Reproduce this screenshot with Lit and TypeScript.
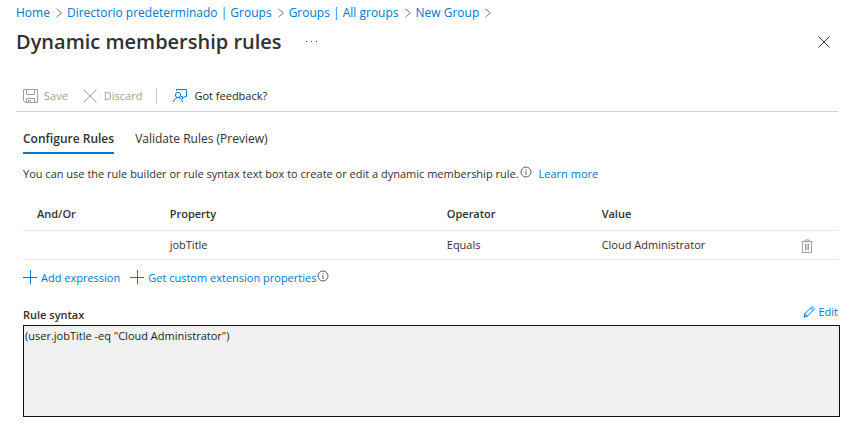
import { LitElement, html, css, svg } from "lit";
import { customElement, property, state } from "lit/decorators.js";
import { classMap } from "lit/directives/class-map.js";

const icons = {
  chevron: { size: [8, 10], body: svg`<path d="M1.5 1 6.5 5 1.5 9" />` },
  save: {
    size: [16, 16],
    body: svg`<path d="M1.500 1.500h14v13h-12l-2-2z M4.500 1.500v5h8v-5 M4.500 14.500v-4h8v4 M6.500 14.500v-2h2v2" />`,
  },
  discard: { size: [16, 16], body: svg`<path d="M1.5 1.5l13 13M14.5 1.5l-13 13" />` },
  feedback: {
    size: [16, 16],
    body: svg`<circle cx="6" cy="7" r="2.600" /><path d="M1.500 14c.4-2.600 2.200-4.400 4.500-4.400s4.100 1.800 4.500 4.400M4.500 3v-1.500h10v7h-1.500l-2.500 2.300v-2.300h-1.500" />`,
  },
  close: { size: [12, 12], body: svg`<path d="M.5 .5l11 11M11.5 .5l-11 11" />` },
  info: {
    size: [12, 12],
    body: svg`<circle cx="6" cy="6" r="5" /><path d="M6 5v4M6 3v1" />`,
  },
  plus: { size: [14, 14], body: svg`<path d="M7.500 0v14M0 7.500h14" />` },
  trash: {
    size: [12, 14],
    body: svg`<path d="M.5 2.500h11M4 2.500v-1.500h4v1.500M1.500 2.500v11h9v-11M4.500 4.500v7M6 4.500v7M7.500 4.500v7" />`,
  },
  pencil: {
    size: [12, 12],
    body: svg`<path d="M1 11l.8-3.300L8.300 1.200a1.400 1.400 0 0 1 2 0l.5.5a1.400 1.400 0 0 1 0 2L4.300 10.200zM7.500 2l2.500 2.500M1.800 7.700l2.500 2.500" />`,
  },
};

@customElement("line-icon")
class LineIcon extends LitElement {
  @property() name: keyof typeof icons = "info";

  static styles = css`
    :host {
      display: inline-flex;
      flex: none;
    }
    .glyph {
      display: block;
      fill: none;
      stroke: currentColor;
      stroke-width: 1;
    }
  `;

  render() {
    const { size, body } = icons[this.name];
    return html`<svg class="glyph" width=${size[0]} height=${size[1]} viewBox="0 0 ${size[0]} ${size[1]}" aria-hidden="true">${body}</svg>`;
  }
}

@customElement("app-root")
class AppRoot extends LitElement {
  @state() private tab = "Configure Rules";

  private crumbs = ["Home", "Directorio predeterminado | Groups", "Groups | All groups", "New Group"];
  private tabs = ["Configure Rules", "Validate Rules (Preview)"];
  private rules = [{ join: "", property: "jobTitle", operator: "Equals", value: "Cloud Administrator" }];

  static styles = css`
    :host {
      display: block;
      font: 11px/16px "Open Sans", "Noto Sans", sans-serif;
      color: #323130;
      background: #fff;
    }
    button {
      display: inline-flex;
      align-items: center;
      padding: 0;
      border: 0;
      background: none;
      font: inherit;
      color: inherit;
      cursor: pointer;
    }
    a,
    .action {
      color: #0078d4;
      text-decoration: none;
    }
    .page {
      padding: 5px 9px 14px 16px;
    }
    .crumbs {
      display: flex;
      align-items: center;
      font-size: 12px;
      color: #7a7877;
    }
    .crumbs line-icon {
      margin: 0 4px 0 5px;
    }
    .heading {
      display: flex;
      align-items: center;
      height: 41px;
      padding-right: 10px;
    }
    .title {
      margin: 0 24px 0 0;
      font-size: 20px;
      line-height: 32px;
      font-weight: 600;
    }
    .more {
      width: 11px;
      justify-content: space-between;
    }
    .dot {
      width: 1px;
      height: 1px;
      background: #323130;
    }
    .close {
      margin-left: auto;
    }
    .toolbar {
      display: flex;
      align-items: center;
      height: 31px;
      margin: 18px 2px 0 0;
      padding-left: 6px;
      border-bottom: 1px solid #d2d0ce;
    }
    .toolbar button {
      gap: 6px;
    }
    .toolbar button:disabled {
      color: #a19f9d;
    }
    .toolbar button + button {
      margin-left: 14px;
    }
    .divider {
      width: 1px;
      height: 16px;
      margin: 0 15px 0 14px;
      background: #c8c6c4;
    }
    .feedback {
      color: #201f1e;
    }
    .feedback line-icon {
      color: #0078d4;
    }
    .content {
      padding-left: 7px;
    }
    .tabs {
      display: flex;
      gap: 21px;
      padding-top: 16px;
    }
    .tab {
      height: 26px;
      padding-bottom: 2px;
      border-bottom: 2px solid transparent;
      font-size: 12px;
    }
    .tab.active {
      font-weight: 600;
      border-color: #0078d4;
    }
    .intro {
      display: flex;
      margin: 12px 0 0;
    }
    .intro a {
      margin-left: 7px;
    }
    .info {
      color: #605e5c;
      margin-left: 1px;
      align-self: flex-start;
    }
    .rules {
      width: 100%;
      margin-top: 16px;
      border-collapse: collapse;
      table-layout: fixed;
      text-align: left;
    }
    .rules th,
    .rules td {
      box-sizing: border-box;
      height: 29px;
      padding: 0;
      border-bottom: 1px solid #edebe9;
    }
    .rules th {
      height: 32px;
      font-weight: 600;
    }
    .rules .join {
      width: 18%;
      padding-left: 14px;
    }
    .property {
      width: 34%;
    }
    .operator {
      width: 19%;
    }
    .delete {
      width: 37px;
    }
    .delete-button {
      color: #a19f9d;
      vertical-align: middle;
    }
    .commands {
      display: flex;
      margin-top: 10px;
    }
    .commands .action {
      gap: 4px;
    }
    .commands .action + .action {
      margin-left: 10px;
    }
    .commands .action line-icon {
      margin-bottom: 3px;
    }
    .syntax-head {
      display: flex;
      justify-content: space-between;
      margin: 16px 2px 2px 0;
    }
    .syntax-head label {
      font-weight: 600;
      padding-top: 4px;
    }
    .syntax-head .action {
      gap: 3px;
      height: 18px;
    }
    .syntax {
      display: block;
      box-sizing: border-box;
      width: 100%;
      height: 92px;
      padding: 2px 1px;
      border: 1px solid #111;
      border-radius: 0;
      background: #f1f1f1;
      color: #201f1e;
      font: inherit;
      resize: none;
      outline: none;
    }
    .table-wrap {
      padding-right: 2px;
    }
  `;

  render() {
    return html`
      <main class="page">
        <nav class="crumbs" aria-label="Breadcrumb">
          ${this.crumbs.map((c) => html`<a href="#">${c}</a><line-icon name="chevron"></line-icon>`)}
        </nav>
        <header class="heading">
          <h1 class="title">Dynamic membership rules</h1>
          <button class="more" aria-label="More"><span class="dot"></span><span class="dot"></span><span class="dot"></span></button>
          <button class="close" aria-label="Close"><line-icon name="close"></line-icon></button>
        </header>
        <div class="toolbar" role="toolbar">
          <button disabled><line-icon name="save"></line-icon>Save</button>
          <button disabled><line-icon name="discard"></line-icon>Discard</button>
          <span class="divider"></span>
          <button class="feedback"><line-icon name="feedback"></line-icon>Got feedback?</button>
        </div>
        <div class="content">
          <div class="tabs" role="tablist">
            ${this.tabs.map(
              (t) => html`<button
                role="tab"
                class=${classMap({ tab: true, active: t === this.tab })}
                aria-selected=${t === this.tab}
                @click=${() => (this.tab = t)}
              >${t}</button>`
            )}
          </div>
          <p class="intro">
            <span>You can use the rule builder or rule syntax text box to create or edit a dynamic membership rule.</span>
            <line-icon class="info" name="info"></line-icon>
            <a href="#">Learn more</a>
          </p>
          <div class="table-wrap">
            <table class="rules">
              <thead>
                <tr>
                  <th class="join">And/Or</th>
                  <th class="property">Property</th>
                  <th class="operator">Operator</th>
                  <th>Value</th>
                  <th class="delete"></th>
                </tr>
              </thead>
              <tbody>
                ${this.rules.map(
                  (r) => html`<tr>
                    <td class="join">${r.join}</td>
                    <td>${r.property}</td>
                    <td>${r.operator}</td>
                    <td>${r.value}</td>
                    <td><button class="delete-button" aria-label="Delete"><line-icon name="trash"></line-icon></button></td>
                  </tr>`
                )}
              </tbody>
            </table>
          </div>
          <div class="commands">
            <button class="action"><line-icon name="plus"></line-icon>Add expression</button>
            <button class="action"><line-icon name="plus"></line-icon>Get custom extension properties</button>
            <line-icon class="info" name="info"></line-icon>
          </div>
          <div class="syntax-head">
            <label for="syntax">Rule syntax</label>
            <button class="action"><line-icon name="pencil"></line-icon>Edit</button>
          </div>
          <textarea id="syntax" class="syntax" readonly .value=${'(user.jobTitle -eq "Cloud Administrator")'}></textarea>
        </div>
      </main>
    `;
  }
}
